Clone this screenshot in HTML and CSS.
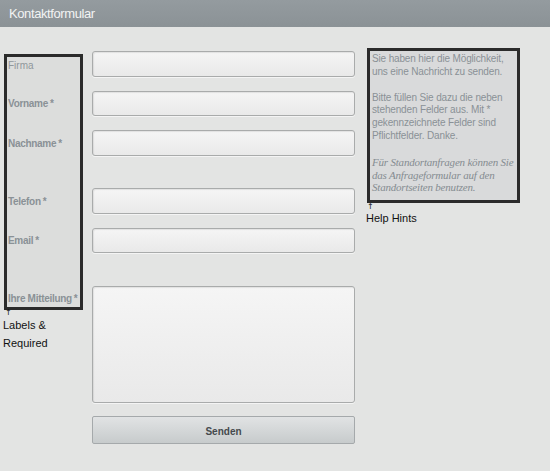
FILE: index.html
```html
<!DOCTYPE html>
<html lang="de">
<head>
<meta charset="utf-8">
<title>Kontaktformular</title>
<link rel="stylesheet" href="styles.css">
</head>
<body>
<header class="topbar">
  <h1 class="title">Kontaktformular</h1>
</header>
<main class="layout">
  <div class="col-labels">
    <div class="label-box">
      <div class="lbl lbl-1 lbl-optional">Firma</div>
      <div class="lbl lbl-2">Vorname<span class="req">*</span></div>
      <div class="lbl lbl-3">Nachname<span class="req">*</span></div>
      <div class="lbl lbl-4">Telefon<span class="req">*</span></div>
      <div class="lbl lbl-5">Email<span class="req">*</span></div>
      <div class="lbl lbl-6">Ihre Mitteilung<span class="req">*</span></div>
    </div>
    <div class="note note-labels">
      <div class="arrow">&#8593;</div>
      <div>Labels &amp;</div>
      <div>Required</div>
    </div>
  </div>
  <form class="col-form">
    <input class="field f-1" type="text">
    <input class="field f-2" type="text">
    <input class="field f-3" type="text">
    <input class="field f-4" type="text">
    <input class="field f-5" type="text">
    <textarea class="field area"></textarea>
    <button class="send" type="button">Senden</button>
  </form>
  <div class="col-hints">
    <div class="hint-box">
      <p>Sie haben hier die Möglichkeit, uns eine Nachricht zu senden.</p>
      <p>Bitte füllen Sie dazu die neben stehenden Felder aus. Mit * gekennzeichnete Felder sind Pflichtfelder. Danke.</p>
      <p class="hint-em">Für Standortanfragen können Sie das Anfrageformular auf den Standortseiten benutzen.</p>
    </div>
    <div class="note note-hints">
      <div class="arrow">&#8593;</div>
      <div>Help Hints</div>
    </div>
  </div>
</main>
</body>
</html>
```
FILE: styles.css
```css
html, body {
  margin: 0;
  padding: 0;
}
body {
  width: 550px;
  height: 471px;
  overflow: hidden;
  background: #e3e4e3;
  font-family: "Liberation Sans", Arial, sans-serif;
}
.topbar {
  height: 27px;
  background: linear-gradient(#949b9f, #8b9296);
  display: flex;
  align-items: center;
  padding-left: 9px;
}
.title {
  margin: 0;
  font-size: 13px;
  font-weight: normal;
  color: #f2f3f3;
  letter-spacing: -0.4px;
  line-height: 16px;
  padding-top: 1px;
}
.layout {
  display: flex;
  align-items: flex-start;
  padding-left: 4px;
}
.col-labels {
  width: 79px;
  margin-top: 27px;
}
.label-box {
  box-sizing: border-box;
  height: 256px;
  border: 3px solid #2b2b2b;
  background: #dcdddc;
  padding: 2px 0 0 1px;
  display: flex;
  flex-direction: column;
}
.lbl {
  font-size: 10px;
  line-height: 14px;
  font-weight: bold;
  color: #8a9196;
  letter-spacing: -0.3px;
  white-space: nowrap;
  flex: none;
}
.lbl-optional {
  font-weight: normal;
  color: #90979b;
  letter-spacing: 0;
}
.lbl-1 { height: 38px; }
.lbl-2 { height: 40px; }
.lbl-3 { height: 58px; }
.lbl-4 { height: 39px; }
.lbl-5 { height: 58px; }
.lbl-6 { height: 14px; }
.req {
  margin-left: 2px;
  font-weight: bold;
}
.note {
  font-size: 11px;
  color: #111;
  line-height: 18px;
}
.note-labels {
  margin-left: -1px;
  margin-top: -1px;
}
.arrow {
  font-family: "DejaVu Sans", sans-serif;
  font-size: 8px;
  line-height: 8px;
  height: 7px;
  padding-left: 2px;
  color: #111;
}
.col-form {
  margin: 24px 0 0 9px;
  width: 263px;
  display: flex;
  flex-direction: column;
}
.field {
  box-sizing: border-box;
  display: block;
  width: 263px;
  height: 26px;
  margin: 0;
  padding: 0;
  border: 1px solid #a9abab;
  border-radius: 3px;
  background: linear-gradient(#f5f5f5, #e9e9e9);
  box-shadow: inset 1px 1px 1px rgba(0,0,0,0.08), 0 1px 0 rgba(255,255,255,0.6);
  font: 11px "Liberation Sans", Arial, sans-serif;
  resize: none;
}
.f-1 { margin-bottom: 14px; }
.f-2 { height: 25px; margin-bottom: 14px; }
.f-3 { margin-bottom: 32px; }
.f-4 { margin-bottom: 14px; }
.f-5 { height: 25px; margin-bottom: 33px; }
.area {
  height: 117px;
  margin-bottom: 13px;
}
.send {
  box-sizing: border-box;
  width: 263px;
  height: 28px;
  margin: 0;
  border: 1px solid #a5a9ab;
  border-radius: 2px;
  background: linear-gradient(#e1e3e4, #c7cbcc);
  font: bold 10px "Liberation Sans", Arial, sans-serif;
  color: #454a4d;
  padding: 2px 0 0;
}
.col-hints {
  margin: 21px 0 0 12px;
  width: 153px;
}
.hint-box {
  box-sizing: border-box;
  height: 155px;
  border: 3px solid #2b2b2b;
  background: #d9dadb;
  padding: 2px 0 0 2px;
  font-size: 10px;
  line-height: 12.8px;
  color: #8a9196;
  letter-spacing: -0.15px;
}
.hint-box p {
  margin: 0 0 13px;
}
.hint-em {
  font-family: "Liberation Serif", "Times New Roman", serif;
  font-style: italic;
  font-size: 11px;
  letter-spacing: -0.2px;
  color: #858c91;
}
.note-hints {
  margin-top: 0;
  margin-left: -1px;
  line-height: 16px;
}
.note-hints .arrow {
  padding-left: 1px;
}
```
